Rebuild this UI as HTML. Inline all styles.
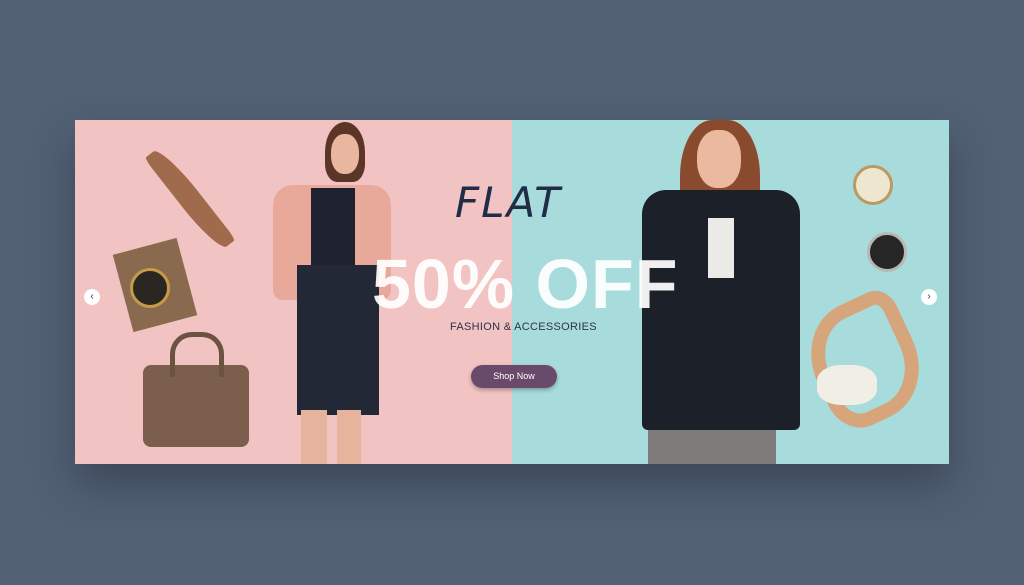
<!DOCTYPE html>
<html><head><style>
body{margin:0;width:1024px;height:585px;background:#526174;overflow:hidden;font-family:"Liberation Sans",sans-serif;position:relative}
.b{position:absolute;left:75px;top:120px;width:874px;height:344px;overflow:hidden;box-shadow:0 20px 40px rgba(30,40,55,.45)}
.p{position:absolute}
</style></head><body>
<div class="b">
<div class="p" style="left:0;top:0;width:437px;height:344px;background:#f1c3c2"></div>
<div class="p" style="left:437px;top:0;width:437px;height:344px;background:#a8dcdc"></div>
<div class="p" style="left:55px;top:68px;width:120px;height:22px;background:#a06a4c;border-radius:50% 10% 50% 10%;transform:rotate(52deg)"></div>
<div class="p" style="left:47px;top:125px;width:66px;height:80px;background:#8a6a4e;transform:rotate(-15deg)"></div>
<div class="p" style="left:55px;top:148px;width:34px;height:34px;background:#2a2622;border-radius:50%;border:3px solid #c79a4a"></div>
<div class="p" style="left:68px;top:245px;width:106px;height:82px;background:#7b5f4c;border-radius:8px"></div>
<div class="p" style="left:95px;top:212px;width:44px;height:40px;border:5px solid #6c5241;border-bottom:none;border-radius:22px 22px 0 0"></div>
<div class="p" style="left:250px;top:2px;width:40px;height:60px;background:#5b3526;border-radius:50% 50% 30% 30%"></div>
<div class="p" style="left:256px;top:14px;width:28px;height:40px;background:#e9b79f;border-radius:45%"></div>
<div class="p" style="left:198px;top:65px;width:118px;height:115px;background:#e9a99a;border-radius:20px 20px 10px 10px"></div>
<div class="p" style="left:236px;top:68px;width:44px;height:80px;background:#1e2230"></div>
<div class="p" style="left:222px;top:145px;width:82px;height:150px;background:#232836"></div>
<div class="p" style="left:226px;top:290px;width:26px;height:54px;background:#e6b49d"></div>
<div class="p" style="left:262px;top:290px;width:24px;height:54px;background:#e6b49d"></div>
<div class="p" style="left:605px;top:0;width:80px;height:140px;background:#8a4a2e;border-radius:40% 40% 20% 20%"></div>
<div class="p" style="left:622px;top:10px;width:44px;height:58px;background:#eab9a0;border-radius:45%"></div>
<div class="p" style="left:567px;top:70px;width:158px;height:240px;background:#1c2029;border-radius:24px 24px 6px 6px"></div>
<div class="p" style="left:633px;top:98px;width:26px;height:60px;background:#eceae6"></div>
<div class="p" style="left:573px;top:310px;width:128px;height:34px;background:#7d7c7a"></div>
<div class="p" style="left:778px;top:45px;width:34px;height:34px;background:#efe6d2;border-radius:50%;border:3px solid #b89a62"></div>
<div class="p" style="left:792px;top:112px;width:34px;height:34px;background:#262626;border-radius:50%;border:3px solid #b9b7b2"></div>
<div class="p" style="left:738px;top:180px;width:104px;height:122px;border:14px solid #d7a57c;border-radius:50% 20% 50% 30%;box-sizing:border-box;transform:rotate(-25deg)"></div>
<div class="p" style="left:742px;top:245px;width:60px;height:40px;background:#f1eee6;border-radius:40%"></div>
<div class="p" style="left:380px;top:58px;font-size:42px;font-style:italic;color:#1f2d48;letter-spacing:2px;font-family:'DejaVu Sans',sans-serif;font-weight:300">FLAT</div>
<div class="p" style="left:297px;top:124px;font-size:70px;font-weight:bold;color:rgba(255,255,255,.93);line-height:80px;letter-spacing:1px;font-family:'Liberation Sans',sans-serif">50% OFF</div>
<div class="p" style="left:375px;top:201px;font-size:11px;color:#2a3448;letter-spacing:.3px">FASHION &amp; ACCESSORIES</div>
<div class="p" style="left:396px;top:245px;width:86px;height:23px;background:#6a4a6a;border-radius:12px;color:#fff;font-size:9px;text-align:center;line-height:23px;box-shadow:0 2px 4px rgba(0,0,0,.3)">Shop Now</div>
<div class="p" style="left:9px;top:169px;width:16px;height:16px;background:#fff;border-radius:50%;font-size:10px;line-height:16px;text-align:center;color:#333">‹</div>
<div class="p" style="left:846px;top:169px;width:16px;height:16px;background:#fff;border-radius:50%;font-size:10px;line-height:16px;text-align:center;color:#333">›</div>
</div>
</body></html>
